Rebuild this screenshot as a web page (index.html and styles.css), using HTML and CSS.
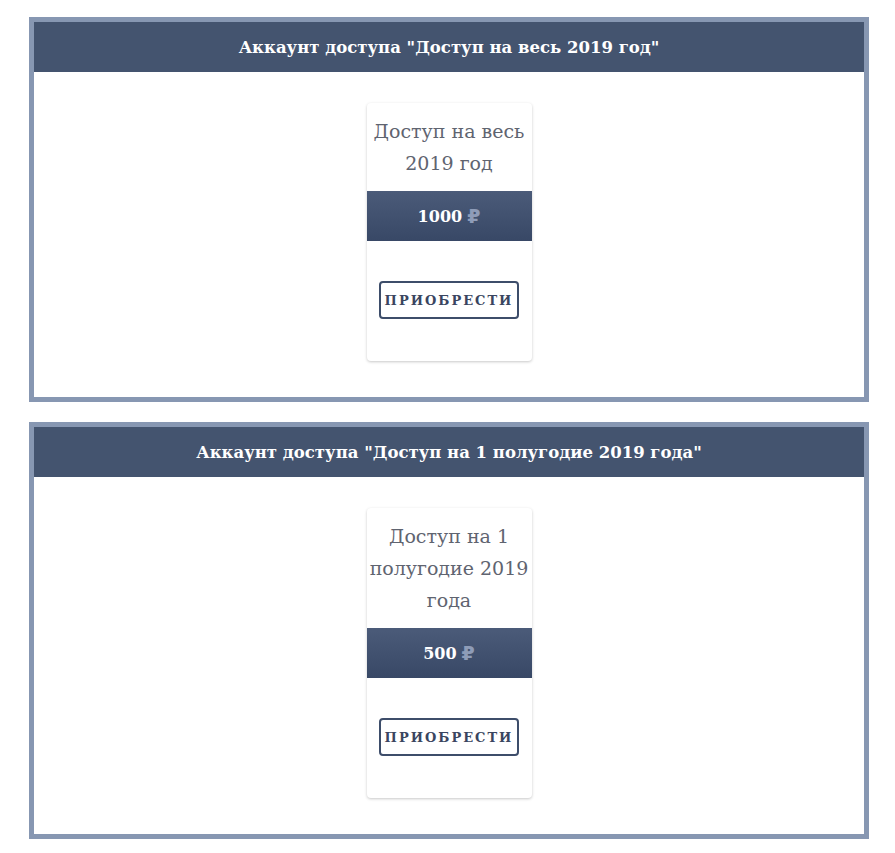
FILE: index.html
```html
<!DOCTYPE html>
<html lang="ru">
<head>
    <meta charset="UTF-8">
    <title>Аккаунты доступа</title>
    <link rel="stylesheet" href="styles.css">
</head>
<body>
    <div class="page">
        <div class="access-box">
            <div class="access-header">Аккаунт доступа "Доступ на весь 2019 год"</div>
            <div class="access-body">
                <div class="tariff">
                    <div class="tariff-title">Доступ на весь 2019 год</div>
                    <div class="tariff-price">1000 <span class="rub">₽</span></div>
                    <div class="tariff-action">
                        <button class="buy-btn">Приобрести</button>
                    </div>
                </div>
            </div>
        </div>

        <div class="access-box">
            <div class="access-header">Аккаунт доступа "Доступ на 1 полугодие 2019 года"</div>
            <div class="access-body">
                <div class="tariff">
                    <div class="tariff-title">Доступ на 1 полугодие 2019 года</div>
                    <div class="tariff-price">500 <span class="rub">₽</span></div>
                    <div class="tariff-action">
                        <button class="buy-btn">Приобрести</button>
                    </div>
                </div>
            </div>
        </div>
    </div>
</body>
</html>
```

FILE: styles.css
```css
* {
    margin: 0;
    padding: 0;
    box-sizing: border-box;
}

body {
    font-family: 'DejaVu Serif', 'Liberation Serif', serif;
    background: #fff;
}

.page {
    width: 840px;
    margin: 17px 0 0 29px;
    display: flex;
    flex-direction: column;
    gap: 20px;
}

.access-box {
    border: 5px solid #8797b2;
    background: #fff;
}

.access-header {
    background: #44546f;
    color: #fff;
    height: 50px;
    display: flex;
    align-items: center;
    justify-content: center;
    font-size: 16.5px;
    font-weight: bold;
}

.access-body {
    display: flex;
    justify-content: center;
    padding: 31px 0 36px;
}

.tariff {
    width: 165px;
    background: #fff;
    border-radius: 4px;
    box-shadow: 0 1px 3px rgba(0,0,0,0.22);
    overflow: hidden;
    text-align: center;
}

.tariff-title {
    padding: 12px 0;
    font-size: 19px;
    line-height: 32px;
    color: #5f6470;
    font-weight: normal;
}

.tariff-price {
    height: 50px;
    display: flex;
    align-items: center;
    justify-content: center;
    gap: 5px;
    background: linear-gradient(to bottom, #4b5b79 0%, #384866 100%);
    color: #fff;
    font-weight: bold;
    font-size: 16px;
}

.tariff-price .rub {
    color: #8e9cb8;
    font-family: 'DejaVu Sans', sans-serif;
    font-size: 19px;
}

.tariff-action {
    padding: 40px 0 42px;
}

.buy-btn {
    width: 140px;
    height: 38px;
    background: #fff;
    border: 2px solid #3d4d6a;
    border-radius: 4px;
    color: #3a4560;
    font-family: inherit;
    font-weight: bold;
    font-size: 13px;
    letter-spacing: 2px;
    text-transform: uppercase;
    cursor: pointer;
}
```
